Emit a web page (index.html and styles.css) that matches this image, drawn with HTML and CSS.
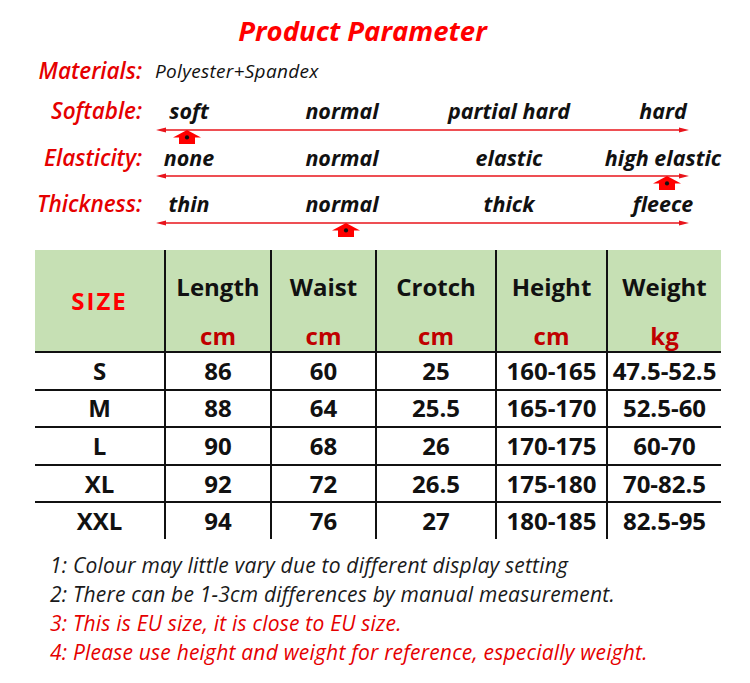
FILE: index.html
```html
<!DOCTYPE html>
<html lang="en">
<head>
<meta charset="utf-8">
<title>Product Parameter</title>
<link rel="stylesheet" href="styles.css">
</head>
<body>
<main class="sheet">
  <h1 class="title">Product Parameter</h1>

  <section class="params">
    <div class="row materials-row">
      <span class="label">Materials:</span>
      <span class="material">Polyester+Spandex</span>
    </div>

    <div class="group">
      <div class="row">
        <span class="label">Softable:</span>
        <span class="value">soft</span>
        <span class="value">normal</span>
        <span class="value">partial hard</span>
        <span class="value">hard</span>
      </div>
      <div class="scale-line">
        <svg class="arrow" width="533" height="6" viewBox="0 0 533 6"><line x1="6" y1="3" x2="527" y2="3"/><polygon points="0,3 10,0.6 10,5.4"/><polygon points="533,3 523,0.6 523,5.4"/></svg>
        <svg class="marker at-1" width="28" height="14" viewBox="0 0 28 14"><polygon class="m-red" points="0,7.6 14,0 28,7.6"/><rect class="m-red" x="6" y="7" width="16" height="7"/><circle cx="14" cy="7.4" r="2.1"/></svg>
      </div>
    </div>

    <div class="group">
      <div class="row">
        <span class="label">Elasticity:</span>
        <span class="value">none</span>
        <span class="value">normal</span>
        <span class="value">elastic</span>
        <span class="value">high elastic</span>
      </div>
      <div class="scale-line">
        <svg class="arrow" width="533" height="6" viewBox="0 0 533 6"><line x1="6" y1="3" x2="527" y2="3"/><polygon points="0,3 10,0.6 10,5.4"/><polygon points="533,3 523,0.6 523,5.4"/></svg>
        <svg class="marker at-4" width="28" height="14" viewBox="0 0 28 14"><polygon class="m-red" points="0,7.6 14,0 28,7.6"/><rect class="m-red" x="6" y="7" width="16" height="7"/><circle cx="14" cy="7.4" r="2.1"/></svg>
      </div>
    </div>

    <div class="group">
      <div class="row">
        <span class="label">Thickness:</span>
        <span class="value">thin</span>
        <span class="value">normal</span>
        <span class="value">thick</span>
        <span class="value">fleece</span>
      </div>
      <div class="scale-line">
        <svg class="arrow" width="533" height="6" viewBox="0 0 533 6"><line x1="6" y1="3" x2="527" y2="3"/><polygon points="0,3 10,0.6 10,5.4"/><polygon points="533,3 523,0.6 523,5.4"/></svg>
        <svg class="marker at-2" width="28" height="14" viewBox="0 0 28 14"><polygon class="m-red" points="0,7.6 14,0 28,7.6"/><rect class="m-red" x="6" y="7" width="16" height="7"/><circle cx="14" cy="7.4" r="2.1"/></svg>
      </div>
    </div>
  </section>

  <table class="size-table">
    <colgroup>
      <col class="c-size"><col class="c-length"><col class="c-waist"><col class="c-crotch"><col class="c-height"><col class="c-weight">
    </colgroup>
    <thead>
      <tr>
        <th class="size-head">SIZE</th>
        <th><div class="head"><span>Length</span><span class="unit">cm</span></div></th>
        <th><div class="head"><span>Waist</span><span class="unit">cm</span></div></th>
        <th><div class="head"><span>Crotch</span><span class="unit">cm</span></div></th>
        <th><div class="head"><span>Height</span><span class="unit">cm</span></div></th>
        <th><div class="head"><span>Weight</span><span class="unit">kg</span></div></th>
      </tr>
    </thead>
    <tbody>
      <tr><td>S</td><td>86</td><td>60</td><td>25</td><td>160-165</td><td>47.5-52.5</td></tr>
      <tr><td>M</td><td>88</td><td>64</td><td>25.5</td><td>165-170</td><td>52.5-60</td></tr>
      <tr><td>L</td><td>90</td><td>68</td><td>26</td><td>170-175</td><td>60-70</td></tr>
      <tr><td>XL</td><td>92</td><td>72</td><td>26.5</td><td>175-180</td><td>70-82.5</td></tr>
      <tr><td>XXL</td><td>94</td><td>76</td><td>27</td><td>180-185</td><td>82.5-95</td></tr>
    </tbody>
  </table>

  <div class="notes">
    <p>1: Colour may little vary due to different display setting</p>
    <p>2: There can be 1-3cm differences by manual measurement.</p>
    <p class="warn">3: This is EU size, it is close to EU size.</p>
    <p class="warn">4: Please use height and weight for reference, especially weight.</p>
  </div>
</main>
</body>
</html>
```

FILE: styles.css
```css
* { box-sizing: border-box; }

body {
  margin: 0;
  background: #fff;
  font-family: "Open Sans", "Noto Sans", "Liberation Sans", sans-serif;
  color: #111;
}

.sheet {
  width: 750px;
}

.title {
  margin: 0 25px 0 0;
  padding-top: 14px;
  height: 48px;
  line-height: 34px;
  font-size: 27.5px;
  font-weight: 700;
  font-style: italic;
  color: #f00;
  text-align: center;
}

.params {
  margin-top: 8px;
}

.row {
  display: grid;
  grid-template-columns: 146px 86px 220px 114px 184px;
  height: 30px;
  line-height: 30px;
}

.group .row {
  height: 32px;
  align-items: end;
}

.materials-row {
  margin-bottom: 2.5px;
}

.label {
  padding-right: 4px;
  text-align: right;
  font-size: 22.5px;
  font-weight: 600;
  font-style: italic;
  color: #e50000;
  white-space: nowrap;
}

.material {
  grid-column: 2 / -1;
  padding-left: 9px;
  font-size: 19px;
  font-weight: 500;
  font-style: italic;
  letter-spacing: 0.3px;
  color: #111;
}

.value {
  display: flex;
  justify-content: center;
  white-space: nowrap;
  font-size: 21.5px;
  font-weight: 700;
  font-style: italic;
  color: #111;
}

.row .value:last-child {
  padding-left: 10px;
}

.group {
  margin-top: 8px;
}

.scale-line {
  position: relative;
  margin-left: 156px;
  margin-top: 0.5px;
  width: 533px;
  height: 6px;
}

.arrow {
  display: block;
}

.arrow line {
  stroke: #e8141b;
  stroke-width: 1.5;
}

.arrow polygon {
  fill: #e8141b;
}

.marker {
  position: absolute;
  top: 3px;
}

.marker .m-red {
  fill: #f00;
}

.marker circle {
  fill: #111;
}

.marker.at-1 { left: 17px; }
.marker.at-2 { left: 176px; }
.marker.at-4 { left: 497px; }

.size-table {
  margin: 24.5px 0 0 35px;
  width: 686px;
  table-layout: fixed;
  border-collapse: separate;
  border-spacing: 0;
  font-weight: 700;
  font-size: 24px;
  color: #111;
}

.c-size { width: 129px; }
.c-length { width: 106px; }
.c-waist { width: 105px; }
.c-crotch { width: 120px; }
.c-height { width: 111px; }
.c-weight { width: 115px; }

.size-table th {
  height: 101px;
  padding: 0;
  background: #c6e0b4;
  font-weight: 700;
  vertical-align: top;
}

.size-table th + th,
.size-table td + td {
  border-left: 2px solid #111;
}

.size-table .size-head {
  vertical-align: middle;
  letter-spacing: 2px;
  color: #f00;
}

.head {
  display: flex;
  flex-direction: column;
  justify-content: space-between;
  align-items: center;
  height: 101px;
  padding-top: 22px;
  line-height: 30px;
}

.unit {
  color: #c00000;
}

.size-table td {
  height: 37.6px;
  padding: 0;
  border-top: 2px solid #111;
  text-align: center;
  vertical-align: middle;
  line-height: 30px;
  white-space: nowrap;
}

.notes {
  margin-top: 12px;
  padding-left: 50px;
  font-size: 21px;
  font-style: italic;
  letter-spacing: 0.2px;
  line-height: 29px;
  color: #1a1a1a;
}

.notes p {
  margin: 0;
}

.notes .warn {
  color: #e50000;
}
```
